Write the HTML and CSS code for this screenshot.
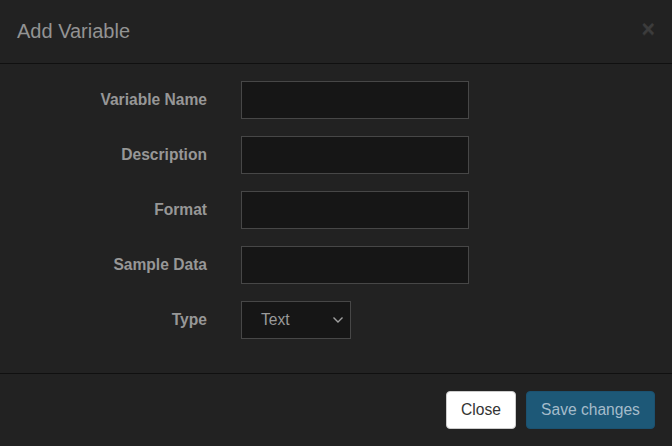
FILE: index.html
```html
<!DOCTYPE html>
<html>
<head>
<meta charset="utf-8">
<link rel="stylesheet" href="styles.css">
</head>
<body>
<div class="modal">
  <div class="modal-header">
    <h4 class="modal-title">Add Variable</h4>
    <button class="close" type="button" aria-label="Close">&times;</button>
  </div>
  <div class="modal-body">
    <form class="form">
      <div class="form-group">
        <label class="label">Variable Name</label>
        <div class="field"><input class="input" type="text"></div>
      </div>
      <div class="form-group">
        <label class="label">Description</label>
        <div class="field"><input class="input" type="text"></div>
      </div>
      <div class="form-group">
        <label class="label">Format</label>
        <div class="field"><input class="input" type="text"></div>
      </div>
      <div class="form-group">
        <label class="label">Sample Data</label>
        <div class="field"><input class="input" type="text"></div>
      </div>
      <div class="form-group">
        <label class="label">Type</label>
        <div class="field">
          <div class="select">
            <span class="select-value">Text</span>
            <svg class="chevron" width="12" height="8" viewBox="0 0 12 8"><path d="M1.5 1.5 L6 6 L10.5 1.5" fill="none" stroke="#a0a0a0" stroke-width="1.4"/></svg>
          </div>
        </div>
      </div>
    </form>
  </div>
  <div class="modal-footer">
    <button class="btn btn-default" type="button">Close</button>
    <button class="btn btn-primary" type="button">Save changes</button>
  </div>
</div>
</body>
</html>
```
FILE: styles.css
```css
html, body {
  margin: 0;
  padding: 0;
  background: #222222;
}
body {
  font-family: "Liberation Sans", Arial, sans-serif;
  width: 672px;
  height: 446px;
  overflow: hidden;
}
.modal {
  display: flex;
  flex-direction: column;
  height: 446px;
}
.modal-header {
  display: flex;
  align-items: center;
  justify-content: space-between;
  padding: 17px 17px 17px 17px;
  height: 29px;
  border-bottom: 1px solid #101010;
}
.modal-title {
  margin: 0;
  font-size: 20px;
  font-weight: normal;
  color: #939393;
  line-height: 29px;
}
.close {
  background: none;
  border: 0;
  padding: 0;
  margin: -4px 0 0 0;
  font-family: "Liberation Sans", Arial, sans-serif;
  font-size: 23px;
  font-weight: bold;
  line-height: 1;
  color: #3c3c3c;
  text-shadow: 0 1px 0 #2c2c2c;
}
.modal-body {
  padding: 17px 17px 0 17px;
  height: 292px;
  border-bottom: 1px solid #101010;
}
.form {
  display: flex;
  flex-direction: column;
  gap: 17px;
}
.form-group {
  display: flex;
  align-items: center;
  height: 38px;
}
.label {
  width: 190px;
  text-align: right;
  font-size: 15.6px;
  font-weight: bold;
  color: #979797;
}
.field {
  margin-left: 34px;
}
.input {
  box-sizing: border-box;
  width: 228px;
  height: 38px;
  margin: 0;
  background: #161616;
  border: 1px solid #474747;
  border-radius: 0;
  outline: none;
  display: block;
}
.select {
  box-sizing: border-box;
  width: 110px;
  height: 38px;
  background: #161616;
  border: 1px solid #474747;
  display: flex;
  align-items: center;
  justify-content: space-between;
  padding: 0 6px 0 19px;
}
.select-value {
  font-size: 15.6px;
  color: #9a9a9a;
}
.chevron {
  display: block;
}
.modal-footer {
  display: flex;
  justify-content: flex-end;
  align-items: flex-start;
  gap: 10px;
  padding: 17px;
  flex: 1;
}
.btn {
  box-sizing: border-box;
  height: 38px;
  padding: 0 13px;
  font-family: "Liberation Sans", Arial, sans-serif;
  font-size: 15.6px;
  border-radius: 4px;
  border: 1px solid transparent;
}
.btn-default {
  width: 70px;
  background: #ffffff;
  color: #333333;
  border-color: #cccccc;
}
.btn-primary {
  width: 129px;
  background: #1d5877;
  border-color: #1b5170;
  color: #a5bccb;
}
```
